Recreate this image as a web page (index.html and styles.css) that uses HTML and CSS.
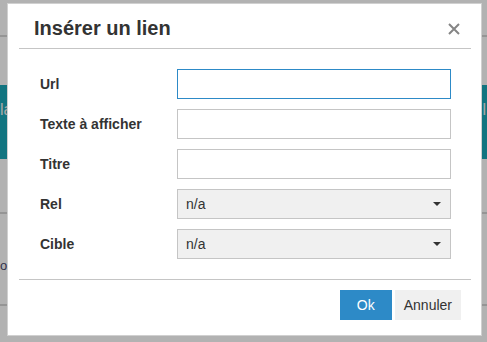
FILE: index.html
```html
<!DOCTYPE html>
<html lang="fr">
<head>
    <meta charset="UTF-8">
    <meta name="viewport" content="width=device-width, initial-scale=1.0">
    <title>Insérer un lien</title>
    <link rel="stylesheet" href="styles.css">
</head>
<body>
    <!-- page behind the modal -->
    <div class="page">
        <div class="page-top"></div>
        <div class="page-rule"></div>
        <div class="page-space"></div>
        <div class="page-band">
            <span class="band-left">la</span>
            <span class="band-right">l</span>
        </div>
        <div class="page-gap"></div>
        <div class="page-rule"></div>
        <div class="page-text">on</div>
        <div class="page-rule"></div>
    </div>

    <div class="overlay"></div>

    <div class="dialog">
        <div class="dialog-head">
            <h1>Insérer un lien</h1>
            <button class="close" type="button" aria-label="Fermer">
                <svg width="12" height="12" viewBox="0 0 12 12">
                    <path d="M1 1 L11 11 M11 1 L1 11" stroke="#858585" stroke-width="2" fill="none"/>
                </svg>
            </button>
        </div>

        <form class="dialog-body" id="linkForm">
            <label for="url">Url</label>
            <input type="text" id="url" class="field focused">

            <label for="text">Texte à afficher</label>
            <input type="text" id="text" class="field">

            <label for="title">Titre</label>
            <input type="text" id="title" class="field">

            <label>Rel</label>
            <div class="select">
                <span>n/a</span>
                <span class="caret"></span>
            </div>

            <label>Cible</label>
            <div class="select">
                <span>n/a</span>
                <span class="caret"></span>
            </div>
        </form>

        <div class="dialog-foot">
            <button type="submit" class="btn btn-primary" form="linkForm">Ok</button>
            <button type="button" class="btn">Annuler</button>
        </div>
    </div>
</body>
</html>
```

FILE: styles.css
```css
* {
    margin: 0;
    padding: 0;
    box-sizing: border-box;
    font-family: "Liberation Sans", Arial, sans-serif;
}
body {
    background-color: #fff;
    overflow: hidden;
}
.page {
    height: 342px;
    overflow: hidden;
    background-color: #fff;
}
.page-top {
    height: 35px;
}
.page-rule {
    height: 2px;
    background-color: #d6d6d6;
}
.page-space {
    height: 48px;
}
.page-band {
    height: 74px;
    background-color: #1ba7b8;
    color: #f2f2f2;
    font-size: 16px;
    line-height: 18px;
    padding-top: 16px;
    display: flex;
    justify-content: space-between;
}
.band-right {
    padding-right: 1px;
}
.page-gap {
    height: 53px;
}
.page-text {
    height: 90px;
    padding-top: 44px;
    font-size: 13px;
    color: #4a4a6e;
}
.overlay {
    position: fixed;
    inset: 0;
    background-color: rgba(0, 0, 0, 0.3);
}
.dialog {
    position: absolute;
    left: 7px;
    top: 3px;
    width: 475px;
    background-color: #fff;
    border: 1px solid #d0d0d0;
    padding: 0 10px 0 11px;
}
.dialog-head {
    display: flex;
    align-items: center;
    justify-content: space-between;
    padding: 12px 11px 8px 15px;
    border-bottom: 1px solid #c5c5c5;
}
h1 {
    font-size: 20px;
    line-height: 24px;
    font-weight: bold;
    color: #333;
}
.close {
    display: flex;
    background: none;
    border: none;
    margin-top: 2px;
    cursor: pointer;
}
.dialog-body {
    display: grid;
    grid-template-columns: 137px 274px;
    grid-auto-rows: 30px;
    row-gap: 10px;
    align-items: center;
    padding: 20px 0 20px 21px;
    border-bottom: 1px solid #c5c5c5;
}
label {
    font-size: 14px;
    font-weight: bold;
    color: #333;
}
.field {
    height: 30px;
    border: 1px solid #c5c5c5;
    background-color: #fff;
    padding: 0 8px;
    font-size: 14px;
    color: #333;
    outline: none;
}
.field.focused {
    border-color: #2d8ac7;
}
.select {
    height: 30px;
    display: flex;
    align-items: center;
    justify-content: space-between;
    border: 1px solid #c5c5c5;
    background-color: #f0f0f0;
    padding: 0 9px 0 8px;
    font-size: 14px;
    color: #333;
}
.caret {
    width: 0;
    height: 0;
    border-left: 4px solid transparent;
    border-right: 4px solid transparent;
    border-top: 4px solid #333;
}
.dialog-foot {
    display: flex;
    justify-content: flex-end;
    gap: 3px;
    padding: 10px 10px 15px 0;
}
.btn {
    height: 30px;
    min-width: 52px;
    padding: 0 9px;
    border: none;
    background-color: #f0f0f0;
    color: #333;
    font-size: 14px;
    cursor: pointer;
}
.btn-primary {
    background-color: #2d8ac7;
    color: #fff;
}
```
